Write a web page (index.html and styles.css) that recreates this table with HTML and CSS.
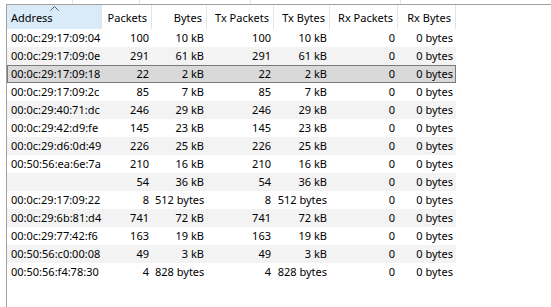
FILE: index.html
```html
<!DOCTYPE html>
<html>
<head>
<meta charset="utf-8">
<link rel="stylesheet" href="styles.css">
</head>
<body>
<div class="topstrip">
  <span class="tick t1"></span><span class="tick t2"></span><span class="tick t3"></span><span class="tick t4"></span>
</div>
<div class="frame">
  <div class="grid">
    <div class="hrow">
      <div class="hc left sorted">Address<svg class="sort" width="9" height="5" viewBox="0 0 9 5"><polyline points="0.5,4.5 4.5,0.5 8.5,4.5" fill="none" stroke="#606060" stroke-width="1"/></svg></div>
      <div class="hc">Packets</div>
      <div class="hc">Bytes</div>
      <div class="hc">Tx Packets</div>
      <div class="hc">Tx Bytes</div>
      <div class="hc">Rx Packets</div>
      <div class="hc">Rx Bytes</div>
    </div>
    <div class="row"><div class="c left">00:0c:29:17:09:04</div><div class="c">100</div><div class="c">10 kB</div><div class="c">100</div><div class="c">10 kB</div><div class="c">0</div><div class="c">0 bytes</div></div>
    <div class="row alt"><div class="c left">00:0c:29:17:09:0e</div><div class="c">291</div><div class="c">61 kB</div><div class="c">291</div><div class="c">61 kB</div><div class="c">0</div><div class="c">0 bytes</div></div>
    <div class="row sel"><div class="c left">00:0c:29:17:09:18</div><div class="c">22</div><div class="c">2 kB</div><div class="c">22</div><div class="c">2 kB</div><div class="c">0</div><div class="c">0 bytes</div></div>
    <div class="row"><div class="c left">00:0c:29:17:09:2c</div><div class="c">85</div><div class="c">7 kB</div><div class="c">85</div><div class="c">7 kB</div><div class="c">0</div><div class="c">0 bytes</div></div>
    <div class="row alt"><div class="c left">00:0c:29:40:71:dc</div><div class="c">246</div><div class="c">29 kB</div><div class="c">246</div><div class="c">29 kB</div><div class="c">0</div><div class="c">0 bytes</div></div>
    <div class="row"><div class="c left">00:0c:29:42:d9:fe</div><div class="c">145</div><div class="c">23 kB</div><div class="c">145</div><div class="c">23 kB</div><div class="c">0</div><div class="c">0 bytes</div></div>
    <div class="row alt"><div class="c left">00:0c:29:d6:0d:49</div><div class="c">226</div><div class="c">25 kB</div><div class="c">226</div><div class="c">25 kB</div><div class="c">0</div><div class="c">0 bytes</div></div>
    <div class="row"><div class="c left">00:50:56:ea:6e:7a</div><div class="c">210</div><div class="c">16 kB</div><div class="c">210</div><div class="c">16 kB</div><div class="c">0</div><div class="c">0 bytes</div></div>
    <div class="row alt"><div class="c left"></div><div class="c">54</div><div class="c">36 kB</div><div class="c">54</div><div class="c">36 kB</div><div class="c">0</div><div class="c">0 bytes</div></div>
    <div class="row"><div class="c left">00:0c:29:17:09:22</div><div class="c">8</div><div class="c">512 bytes</div><div class="c">8</div><div class="c">512 bytes</div><div class="c">0</div><div class="c">0 bytes</div></div>
    <div class="row alt"><div class="c left">00:0c:29:6b:81:d4</div><div class="c">741</div><div class="c">72 kB</div><div class="c">741</div><div class="c">72 kB</div><div class="c">0</div><div class="c">0 bytes</div></div>
    <div class="row"><div class="c left">00:0c:29:77:42:f6</div><div class="c">163</div><div class="c">19 kB</div><div class="c">163</div><div class="c">19 kB</div><div class="c">0</div><div class="c">0 bytes</div></div>
    <div class="row alt"><div class="c left">00:50:56:c0:00:08</div><div class="c">49</div><div class="c">3 kB</div><div class="c">49</div><div class="c">3 kB</div><div class="c">0</div><div class="c">0 bytes</div></div>
    <div class="row"><div class="c left">00:50:56:f4:78:30</div><div class="c">4</div><div class="c">828 bytes</div><div class="c">4</div><div class="c">828 bytes</div><div class="c">0</div><div class="c">0 bytes</div></div>
  </div>
</div>
</body>
</html>
```
FILE: styles.css
```css
html, body {
  margin: 0;
  padding: 0;
  background: #ffffff;
  width: 551px;
  height: 307px;
  overflow: hidden;
}
body {
  font-family: "Noto Sans", "Open Sans", sans-serif;
  font-size: 11px;
  color: #000000;
}
.topstrip {
  position: relative;
  height: 4px;
  background: #ffffff;
}
.tick {
  position: absolute;
  top: 0;
  width: 1px;
  height: 4px;
  background: #e3e3e3;
}
.t1 { left: 72px; }
.t2 { left: 139px; }
.t3 { left: 250px; }
.t4 { left: 400px; }
.frame {
  margin-left: 6px;
  border-top: 1px solid #a0a0a0;
  border-left: 1px solid #a0a0a0;
  height: 302px;
}
.grid {
  width: 449px;
}
.hrow, .row {
  display: grid;
  grid-template-columns: 95px 50px 55px 67px 56px 68px 58px;
}
.hrow {
  height: 24px;
}
.hc {
  position: relative;
  border-right: 1px solid #e5e5e5;
  display: flex;
  align-items: center;
  justify-content: flex-end;
  padding: 1px 4px 0 4px;
  line-height: 16px;
  white-space: nowrap;
}
.hc.left { justify-content: flex-start; }
.hc.sorted { background: #d9ebf9; }
.sort {
  position: absolute;
  left: 43px;
  top: 1px;
}
.row {
  height: 18px;
}
.row.alt { background: #f3f3f3; }
.row.sel {
  background: #d9d9d9;
  box-shadow: inset 0 0 0 1px #7a7a7a;
}
.c {
  text-align: right;
  padding: 0 3px;
  line-height: 18px;
  white-space: nowrap;
  overflow: hidden;
}
.c.left { text-align: left; padding-left: 4px; }
```
